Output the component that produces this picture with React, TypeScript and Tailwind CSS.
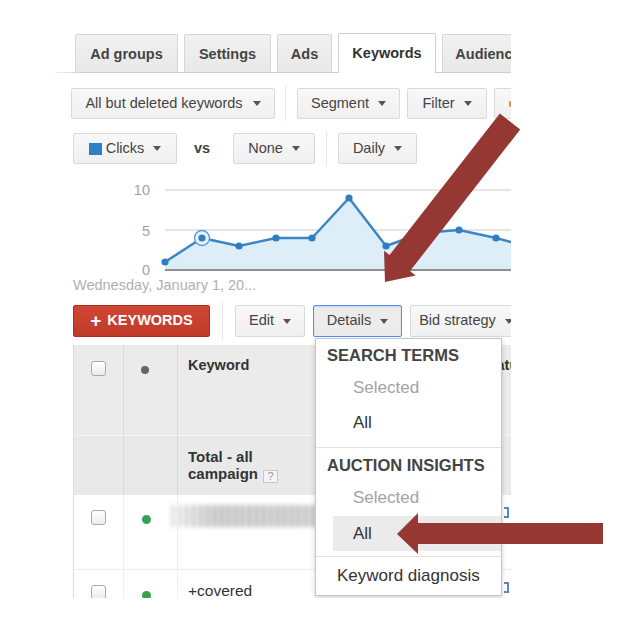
import React from "react";

// small down caret used in all the toolbar buttons
const Caret = ({ className = "ml-[9px]" }: { className?: string }) => (
  <svg width="8" height="5" viewBox="0 0 8 5" className={`shrink-0 ${className}`}>
    <path d="M0 0h8L4 5z" fill="#555" />
  </svg>
);

const Btn = ({
  w,
  children,
  active = false,
}: {
  w: string;
  children: React.ReactNode;
  active?: boolean;
}) => (
  <div
    className={`${w} h-full shrink-0 flex items-center justify-center rounded-[2px] border text-[14.5px] text-[#444] ${
      active
        ? "border-[#4d90fe] bg-[#ececec] shadow-[inset_0_1px_2px_rgba(0,0,0,0.12)]"
        : "border-[#dadada] bg-gradient-to-b from-[#f8f8f8] to-[#f0f0f0]"
    }`}
  >
    {children}
  </div>
);

const Tab = ({ w, label, active = false }: { w: string; label: string; active?: boolean }) => (
  <div
    className={`${w} shrink-0 flex items-center justify-center rounded-t-[2px] border border-b-0 text-[14.5px] font-bold ${
      active
        ? "relative z-10 h-[40px] -mb-px bg-white border-[#d0d0d0] text-[#333]"
        : "h-[38px] pt-[2px] bg-gradient-to-b from-[#f1f1f1] to-[#e8e8e8] border-[#d6d6d6] text-[#444]"
    }`}
  >
    {label}
  </div>
);

const Checkbox = () => (
  <div className="w-[15px] h-[15px] rounded-[3px] border border-[#a9a9a9] bg-gradient-to-b from-white to-[#ececec]" />
);

const points: [number, number][] = [
  [115, 82],
  [152, 58],
  [189, 66],
  [226, 58],
  [262, 58],
  [299, 18],
  [336, 66],
  [372, 53],
  [409, 50],
  [446, 58],
];

function Chart() {
  const line = [...points, [461, 62]].map((p) => p.join(",")).join(" ");
  const area = `${line} 461,90 115,90`;
  return (
    <svg width="461" height="97" viewBox="0 0 461 97" className="block">
      <line x1="115" y1="10" x2="461" y2="10" stroke="#dedede" strokeWidth="1.5" />
      <line x1="115" y1="50" x2="461" y2="50" stroke="#dedede" strokeWidth="1.5" />
      <polygon points={area} fill="#deeef8" />
      <line x1="115" y1="90" x2="461" y2="90" stroke="#8f8f8f" strokeWidth="2" />
      <polyline points={line} fill="none" stroke="#3b87c5" strokeWidth="2.5" strokeLinejoin="round" />
      <circle cx="152" cy="58" r="7.5" fill="#e6f1fa" stroke="#5a9bd0" strokeWidth="1.3" />
      {points.map(([x, y]) => (
        <circle key={x} cx={x} cy={y} r="3.6" fill="#2f7fc0" />
      ))}
      <g fill="#a3a3a3" fontSize="14.5" fontFamily="'Liberation Sans', Arial, sans-serif" textAnchor="end">
        <text x="100" y="15">10</text>
        <text x="100" y="56">5</text>
        <text x="100" y="95">0</text>
      </g>
    </svg>
  );
}

function Dropdown() {
  return (
    <div className="absolute left-[265px] top-[338px] w-[187px] h-[258px] z-20 flex flex-col bg-white border border-[#c6c6c6] shadow-[0_2px_5px_rgba(0,0,0,0.18)]">
      <div className="h-[32px] flex items-center pl-[11px] text-[16.5px] font-bold text-[#444]">SEARCH TERMS</div>
      <div className="h-[34px] flex items-center pl-[37px] text-[17px] text-[#a3a3a3]">Selected</div>
      <div className="h-[35px] flex items-center pl-[37px] text-[17px] text-[#333]">All</div>
      <div className="h-[7px]" />
      <div className="h-px bg-[#e3e3e3]" />
      <div className="h-[34px] flex items-center pl-[11px] text-[16.5px] font-bold text-[#444]">AUCTION INSIGHTS</div>
      <div className="h-[32px] flex items-center pl-[37px] text-[17px] text-[#a3a3a3]">Selected</div>
      <div className="h-[35px] mt-[2px] ml-[17px] flex items-center pl-[20px] bg-[#ebebeb] text-[17px] text-[#333]">All</div>
      <div className="h-[5px]" />
      <div className="h-px bg-[#e3e3e3]" />
      <div className="h-[38px] flex items-center pl-[21px] text-[17px] text-[#333]">Keyword diagnosis</div>
    </div>
  );
}

export default function App() {
  return (
    <div className="relative w-[623px] h-[630px] overflow-hidden bg-white font-['Liberation_Sans',Arial,sans-serif]">
      <div className="relative ml-[50px] w-[461px] h-[598px] pt-[33px] overflow-hidden">
        {/* tabs */}
        <div className="flex items-end gap-[6px] pl-[25px] h-[39px]">
          <Tab w="w-[103px]" label="Ad groups" />
          <Tab w="w-[87px]" label="Settings" />
          <Tab w="w-[55px]" label="Ads" />
          <Tab w="w-[98px]" label="Keywords" active />
          <Tab w="w-[100px]" label="Audiences" />
        </div>
        <div className="h-px bg-gradient-to-r from-white to-[#cdcdcd] to-[7%]" />

        {/* toolbar 1 */}
        <div className="flex items-center h-[31px] mt-[15px] pl-[21px]">
          <Btn w="w-[204px]">
            All but deleted keywords
            <Caret className="ml-[10px]" />
          </Btn>
          <div className="w-px h-[35px] ml-[10px] mr-[11px] bg-[#e8e8e8] shrink-0" />
          <Btn w="w-[103px]">
            Segment
            <Caret />
          </Btn>
          <div className="w-[7px] shrink-0" />
          <Btn w="w-[80px]">
            Filter
            <Caret />
          </Btn>
          <div className="w-[7px] shrink-0" />
          <Btn w="w-[90px]">
            <span className="mr-[56px] w-[4px] h-[6px] bg-[#e59a3a] rounded-[1px]" />
          </Btn>
        </div>

        {/* toolbar 2 */}
        <div className="flex items-center h-[31px] mt-[14px] pl-[23px]">
          <Btn w="w-[104px]">
            <span className="w-[13px] h-[12px] bg-[#2f7fc6] mr-[4px]" />
            Clicks
            <Caret />
          </Btn>
          <span className="w-[19px] ml-[17px] mr-[20px] shrink-0 text-[14.5px] font-bold text-[#444]">vs</span>
          <Btn w="w-[82px]">
            None
            <Caret />
          </Btn>
          <div className="w-px h-[35px] ml-[11px] mr-[11px] bg-[#e8e8e8] shrink-0" />
          <Btn w="w-[79px]">
            Daily
            <Caret />
          </Btn>
        </div>

        {/* chart */}
        <div className="mt-[16px]">
          <Chart />
        </div>
        <div className="h-[16px] leading-[16px] pl-[23px] text-[14.5px] text-[#b0b0b0]">Wednesday, January 1, 20...</div>

        {/* toolbar 3 */}
        <div className="flex items-center h-[32px] mt-[12px] pl-[23px]">
          <div className="w-[137px] h-full shrink-0 flex items-center justify-center rounded-[2px] border border-[#aa2f1e] bg-gradient-to-b from-[#cf4634] to-[#c13a29] text-white text-[14.5px] font-bold">
            <span className="text-[19px] leading-none mr-[6px] -mt-[2px]">+</span>
            KEYWORDS
          </div>
          <div className="w-px h-[40px] ml-[12px] mr-[12px] bg-[#e8e8e8] shrink-0" />
          <Btn w="w-[70px]">
            Edit
            <Caret />
          </Btn>
          <div className="w-[8px] shrink-0" />
          <Btn w="w-[89px]" active>
            Details
            <Caret />
          </Btn>
          <div className="w-[8px] shrink-0" />
          <Btn w="w-[112px]">
            Bid strategy
            <Caret />
          </Btn>
        </div>

        {/* table */}
        <div className="mt-[8px] ml-[23px] w-[500px] border-l border-[#dcdcdc]">
          <div className="flex h-[90px] bg-[#ebebeb]">
            <div className="w-[50px] shrink-0 flex justify-center pt-[16px] border-r border-[#d8d8d8]">
              <Checkbox />
            </div>
            <div className="w-[54px] shrink-0 pl-[17px] pt-[21px] border-r border-[#d8d8d8]">
              <div className="w-[8px] h-[8px] rounded-full bg-[#666]" />
            </div>
            <div className="w-[289px] shrink-0 pl-[10px] pt-[11px] text-[14.5px] leading-[18px] font-bold text-[#333] border-r border-[#d8d8d8]">
              Keyword
            </div>
            <div className="pl-[15px] pt-[11px] text-[14.5px] leading-[18px] font-bold text-[#333]">Status</div>
          </div>
          <div className="flex h-[60px] bg-[#e9e9e9] border-t border-[#f4f4f4]">
            <div className="w-[50px] shrink-0 border-r border-[#d8d8d8]" />
            <div className="w-[54px] shrink-0 border-r border-[#d8d8d8]" />
            <div className="w-[289px] shrink-0 pl-[10px] pt-[12px] text-[15px] leading-[17px] font-bold text-[#333]">
              Total - all
              <br />
              campaign
              <span className="inline-flex items-center justify-center w-[15px] h-[13px] ml-[5px] align-[-1px] border border-[#c8c8c8] bg-[#f4f4f4] text-[11px] leading-none font-normal text-[#999]">
                ?
              </span>
            </div>
          </div>
          <div className="flex h-[75px] bg-white border-b border-[#ececec]">
            <div className="w-[50px] shrink-0 flex justify-center pt-[15px] border-r border-[#eeeeee]">
              <Checkbox />
            </div>
            <div className="w-[54px] shrink-0 pl-[18px] pt-[20px] border-r border-[#eeeeee]">
              <div className="w-[9px] h-[9px] rounded-full bg-[#36a24f]" />
            </div>
            <div className="w-[289px] shrink-0 pt-[10px]">
              <div className="-ml-[7px] w-[147px] h-[22px] blur-[2px] bg-gradient-to-r from-white via-[#cfcfcf] via-[30%] to-[#d4d4d4]">
                <div className="w-full h-full bg-[repeating-linear-gradient(90deg,rgba(150,150,150,0.35)_0_3px,rgba(255,255,255,0.25)_3px_7px)]" />
              </div>
            </div>
            <div className="pl-[37px] pt-[12px]">
              <div className="w-[5px] h-[11px] border-2 border-l-0 border-[#5f86c4]" />
            </div>
          </div>
          <div className="flex h-[75px] bg-white">
            <div className="w-[50px] shrink-0 flex justify-center pt-[15px] border-r border-[#eeeeee]">
              <Checkbox />
            </div>
            <div className="w-[54px] shrink-0 pl-[18px] pt-[21px] border-r border-[#eeeeee]">
              <div className="w-[9px] h-[9px] rounded-full bg-[#36a24f]" />
            </div>
            <div className="w-[289px] shrink-0 pl-[10px] pt-[12px] text-[15.5px] leading-[18px] text-[#333]">+covered</div>
            <div className="pl-[37px] pt-[12px]">
              <div className="w-[5px] h-[11px] border-2 border-l-0 border-[#5f86c4]" />
            </div>
          </div>
        </div>

        <Dropdown />
      </div>

      {/* annotation arrows drawn over the screenshot */}
      <svg width="623" height="630" viewBox="0 0 623 630" className="absolute inset-0 pointer-events-none z-30">
        <polygon
          points="499.8,113.5 520.2,129.5 410,271.1 415.6,275.4 385,282 384,250.8 389.6,255.1"
          fill="#953733"
        />
        <polygon points="397,534 418,513 418,523 603,523 603,544 418,544 418,554" fill="#953733" />
      </svg>
    </div>
  );
}
